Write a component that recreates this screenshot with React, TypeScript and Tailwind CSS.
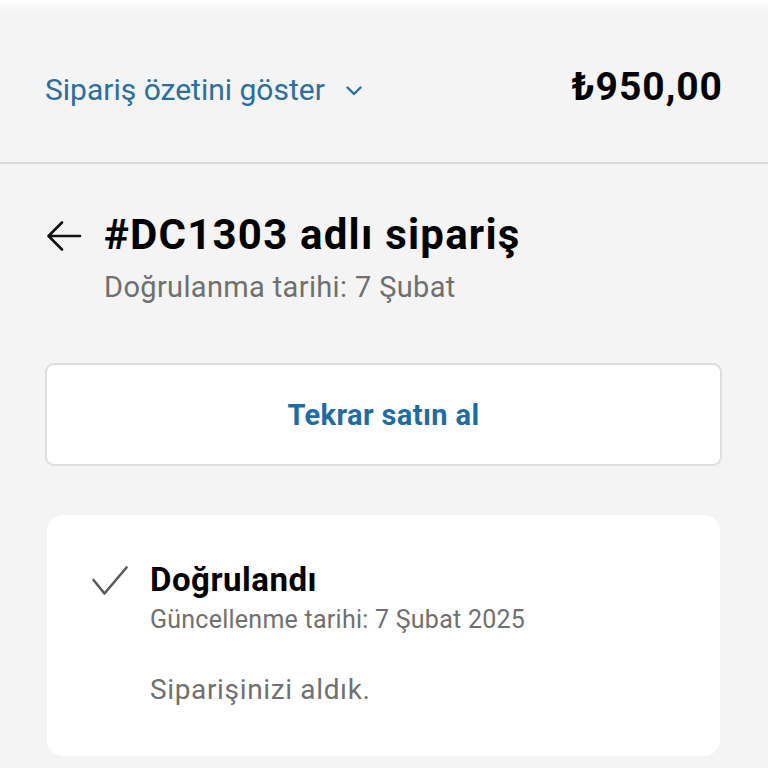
import React from "react";

export default function App() {
  const font = { fontFamily: "Roboto, 'Noto Sans', sans-serif" };
  return (
    <div className="w-[768px] h-[768px] overflow-hidden bg-[#f4f4f4]" style={font}>
      <div className="h-[12px] bg-gradient-to-b from-white to-[#f4f4f4]" />
      <header className="h-[152px] border-b-2 border-[#d9d9d9] flex items-center justify-between pl-[45px] pr-[46px]">
        <div className="flex items-baseline justify-between w-full">
          <div className="flex items-center text-[30px] leading-[40px] text-[#2b6f9f]">
            <span>Sipariş özetini göster</span>
            <svg width="16" height="10" viewBox="0 0 16 10" className="ml-[21px] mt-[2px]" fill="none">
              <path d="M1.5 1.5 L8 8 L14.5 1.5" stroke="#2b6f9f" strokeWidth="2.4" strokeLinecap="round" strokeLinejoin="round" />
            </svg>
          </div>
          <div className="text-[39px] leading-[44px] font-bold tracking-[1px] text-black mr-[-1px]">₺950,00</div>
        </div>
      </header>
      <main className="pl-[45px] pr-[46px]">
        <div className="mt-[47px] flex">
          <div className="w-[59px] h-[48px] flex items-center">
            <svg width="36" height="32" viewBox="0 0 36 32" fill="none" className="ml-[1px] mt-[2px]">
              <path d="M34 16 H2.5 M16 2.5 L2.5 16 L16 29.5" stroke="#111" strokeWidth="2.6" strokeLinecap="round" strokeLinejoin="round" />
            </svg>
          </div>
          <div>
            <h1 className="text-[42px] leading-[48px] font-bold tracking-[1.2px] text-black">#DC1303 adlı sipariş</h1>
            <p className="mt-[10px] text-[29px] leading-[36px] tracking-[0.35px] text-[#6f6f6f]">Doğrulanma tarihi: 7 Şubat</p>
          </div>
        </div>
        <button className="mt-[58px] w-full h-[103px] bg-white border-2 border-[#dedede] rounded-[9px] flex items-center justify-center text-[29px] leading-[36px] font-bold tracking-[0.4px] text-[#1f6ca3]">
          Tekrar satın al
        </button>
        <section className="mt-[49px] mx-[2px] bg-white rounded-[16px] h-[241px] pt-[45px] pl-[45px] flex">
          <div className="w-[58px] h-[40px] flex items-center">
            <svg width="36" height="30" viewBox="0 0 36 30" fill="none" className="mt-[2px]">
              <path d="M1.5 14 L12.5 27.5 L34.5 1.5" stroke="#5a5a5a" strokeWidth="2.6" strokeLinecap="round" strokeLinejoin="round" />
            </svg>
          </div>
          <div>
            <div className="text-[33px] leading-[40px] font-bold tracking-[0.5px] text-black">Doğrulandı</div>
            <div className="mt-[4px] text-[25px] leading-[32px] tracking-[0.25px] text-[#707070]">Güncellenme tarihi: 7 Şubat 2025</div>
            <div className="mt-[37px] text-[28px] leading-[34px] tracking-[0.65px] text-[#707070]">Siparişinizi aldık.</div>
          </div>
        </section>
      </main>
    </div>
  );
}
